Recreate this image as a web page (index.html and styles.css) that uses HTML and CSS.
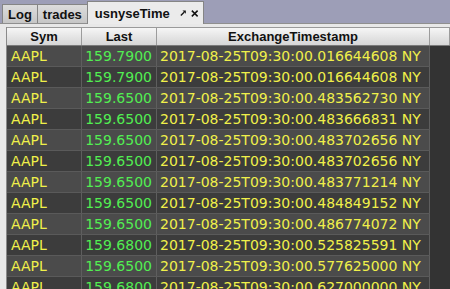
FILE: index.html
```html
<!DOCTYPE html>
<html>
<head>
<meta charset="utf-8">
<link rel="stylesheet" href="styles.css">
</head>
<body>
<div class="tabbar">
  <div class="tab">Log</div>
  <div class="tab">trades</div>
  <div class="tab active">usnyseTime
    <svg class="ico" width="8" height="8" viewBox="0 0 8 8"><path d="M1 7 L5 3" stroke="#111" stroke-width="1.6"/><path d="M3 1 L7 1 L7 5 Z" fill="#111"/></svg>
    <svg class="ico close" width="9" height="9" viewBox="0 0 9 9"><path d="M1 1 L8 8 M8 1 L1 8" stroke="#111" stroke-width="1.8"/></svg>
  </div>
</div>
<div class="panel">
  <div class="pane">
    <div class="header">
      <div class="hc">Sym</div>
      <div class="hc">Last</div>
      <div class="hc">ExchangeTimestamp</div>
      <div class="hc filler"></div>
    </div>
    <div class="rows">
      <div class="row"><div class="c sym">AAPL</div><div class="c last">159.7900</div><div class="c ts">2017-08-25T09:30:00.016644608 NY</div></div>
      <div class="row"><div class="c sym">AAPL</div><div class="c last">159.7900</div><div class="c ts">2017-08-25T09:30:00.016644608 NY</div></div>
      <div class="row"><div class="c sym">AAPL</div><div class="c last">159.6500</div><div class="c ts">2017-08-25T09:30:00.483562730 NY</div></div>
      <div class="row"><div class="c sym">AAPL</div><div class="c last">159.6500</div><div class="c ts">2017-08-25T09:30:00.483666831 NY</div></div>
      <div class="row"><div class="c sym">AAPL</div><div class="c last">159.6500</div><div class="c ts">2017-08-25T09:30:00.483702656 NY</div></div>
      <div class="row"><div class="c sym">AAPL</div><div class="c last">159.6500</div><div class="c ts">2017-08-25T09:30:00.483702656 NY</div></div>
      <div class="row"><div class="c sym">AAPL</div><div class="c last">159.6500</div><div class="c ts">2017-08-25T09:30:00.483771214 NY</div></div>
      <div class="row"><div class="c sym">AAPL</div><div class="c last">159.6500</div><div class="c ts">2017-08-25T09:30:00.484849152 NY</div></div>
      <div class="row"><div class="c sym">AAPL</div><div class="c last">159.6500</div><div class="c ts">2017-08-25T09:30:00.486774072 NY</div></div>
      <div class="row"><div class="c sym">AAPL</div><div class="c last">159.6800</div><div class="c ts">2017-08-25T09:30:00.525825591 NY</div></div>
      <div class="row"><div class="c sym">AAPL</div><div class="c last">159.6500</div><div class="c ts">2017-08-25T09:30:00.577625000 NY</div></div>
      <div class="row"><div class="c sym">AAPL</div><div class="c last">159.6800</div><div class="c ts">2017-08-25T09:30:00.627000000 NY</div></div>
    </div>
  </div>
</div>
</body>
</html>
```
FILE: styles.css
```css
html, body {
  margin: 0;
  padding: 0;
}
body {
  width: 450px;
  height: 289px;
  overflow: hidden;
  background: #9d9eb7;
  font-family: "Liberation Sans", Arial, sans-serif;
}
.tabbar {
  height: 23px;
  display: flex;
  align-items: flex-end;
  padding-left: 2px;
}
.tab {
  box-sizing: border-box;
  height: 19px;
  border: 1px solid #858585;
  border-bottom: none;
  border-right: none;
  background: linear-gradient(#dcdcdc, #c6c6c6);
  font-weight: bold;
  font-size: 13px;
  color: #111;
  display: flex;
  align-items: center;
  padding: 0 5px 0 5px;
}
.tab.active {
  height: 23px;
  margin-bottom: -1px;
  position: relative;
  z-index: 2;
  background: #ebebeb;
  border-right: 1px solid #858585;
  padding: 0 4px 0 7px;
  width: 117px;
}
.ico {
  margin-left: 10px;
}
.ico.close {
  margin-left: 5px;
}
.panel {
  height: 266px;
  background: #e8e8e8;
  border-top: 1px solid #8f8f8f;
  padding: 3px 0 0 6px;
  box-sizing: border-box;
}
.pane {
  border-left: 1px solid #8a8a8a;
  background: #333333;
  height: 300px;
}
.header {
  box-sizing: border-box;
  height: 19px;
  display: grid;
  grid-template-columns: 75px 75px 273px 1fr;
  border-top: 1px solid #9a9a9a;
  border-bottom: 1px solid #7a7a7a;
  background: linear-gradient(#f6f6f6, #e2e2e2 60%, #d6d6d6);
}
.hc {
  box-sizing: border-box;
  border-right: 1px solid #9c9c9c;
  font-weight: bold;
  font-size: 13px;
  color: #111;
  display: flex;
  align-items: center;
  justify-content: center;
}
.rows {
  width: 423px;
}
.row {
  box-sizing: border-box;
  height: 21px;
  display: grid;
  grid-template-columns: 75px 75px 273px;
  border-bottom: 1px solid #5a5a5a;
  background: #4b4b4b;
}
.row:nth-child(even) {
  background: #3c3c3c;
}
.c {
  box-sizing: border-box;
  border-right: 1px solid #5e5e5e;
  font-family: "DejaVu Sans", sans-serif;
  font-size: 14px;
  display: flex;
  align-items: center;
  padding: 0 3px 0 4px;
  white-space: nowrap;
  overflow: hidden;
}
.sym { color: #f0f04a; }
.last { color: #52ee52; justify-content: flex-end; padding-right: 4px; }
.ts { color: #f0f04a; padding-left: 3px; }
```
